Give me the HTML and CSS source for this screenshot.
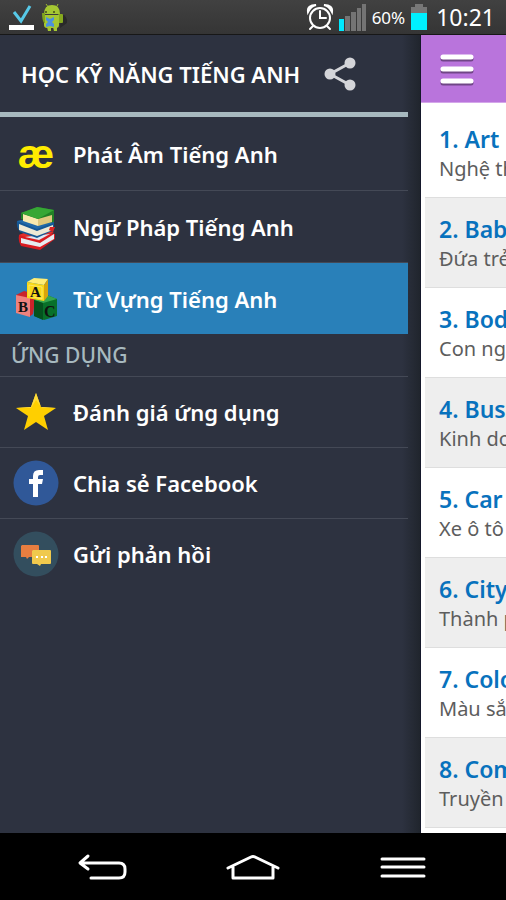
FILE: index.html
```html
<!DOCTYPE html>
<html lang="vi">
<head>
<meta charset="utf-8">
<meta name="viewport" content="width=device-width, initial-scale=1">
<title>Học Kỹ Năng Tiếng Anh</title>
<link rel="stylesheet" href="styles.css">
</head>
<body>
<header class="status">
  <div class="status-group">
    <svg width="28" height="32" viewBox="0 0 28 32" aria-hidden="true"><path d="M6 11l7 9L22 5" fill="none" stroke="#57c9e8" stroke-width="3"/><path d="M1 24h25v5H1z" fill="#fff"/></svg>
    <svg width="30" height="32" viewBox="0 0 30 32" aria-hidden="true">
      <path d="M19 13q7 2 6 9l-7 5z" fill="#292929"/>
      <path d="M4 3l3 4M16 3l-2 4" stroke="#9dbb2b"/>
      <rect x="16" y="13" width="5" height="9" rx="1" fill="#86a91e"/>
      <path d="M2 13Q2 4 10 4q8 0 8 9zM2 14h15v10q0 3-3 3H5q-3 0-3-3z" fill="#a5c732"/>
      <path d="M0 12h3v10H2q-2-3-2-10z" fill="#7fa31d"/><path d="M5 26h4v4H6zM11 26h4v4h-3z" fill="#a5c732"/>
      <circle cx="4" cy="11" r="1" fill="#454c1d"/><circle cx="12" cy="11" r="1" fill="#454c1d"/>
      <path d="M4 16l4 2 4-2v3l-2 2 2 2v3l-4-1-4 1v-3l2-2-2-2z" fill="#4c91df"/>
    </svg>
  </div>
  <div class="status-group status-right">
    <svg width="28" height="30" viewBox="0 0 28 30" fill="none" stroke="#fff" stroke-width="2" stroke-linecap="round" aria-hidden="true"><circle cx="14" cy="16" r="10"/><path d="M14 9v7h6M7 24l-3 3M21 24l3 3"/><path d="M2 10q-1-7 8-7-5 1-8 7zM26 10q1-7-8-7 5 1 8 7z" fill="#fff"/></svg>
    <svg width="28" height="28" viewBox="0 0 28 28" aria-hidden="true"><path fill="#00eaff" d="M0 16h5v12H0z"/><path fill="#747474" d="M6 13h5v15H6zM12 9h5v19h-5zM18 5h4v23h-4zM23 1h4v27h-4z"/></svg>
    <span class="percent">60%</span>
    <svg width="18" height="28" viewBox="0 0 18 28" aria-hidden="true"><path d="M5 1h8v3h4v6H1V4h4z" fill="#777"/><path d="M1 10h16v17H1z" fill="#00f0ff"/></svg>
    <time class="clock">10:21</time>
  </div>
</header>
<div class="stage">
  <nav class="drawer" aria-label="Menu">
    <div class="drawer-head">
      <h1>HỌC KỸ NĂNG TIẾNG ANH</h1>
      <button class="icon-button" aria-label="Chia sẻ"><svg width="32" height="34" viewBox="0 0 32 34" fill="#d4d5d9" aria-hidden="true"><path d="M26 6L6 17l20 11" fill="none" stroke="#d4d5d9" stroke-width="3"/><circle cx="6" cy="17" r="5.5"/><circle cx="26" cy="6" r="5.5"/><circle cx="26" cy="28" r="5.5"/></svg></button>
    </div>
    <ul class="menu">
      <li><a href="#phat-am"><span class="ae" aria-hidden="true">æ</span>Phát Âm Tiếng Anh</a></li>
      <li><a href="#ngu-phap"><svg viewBox="0 0 46 46" aria-hidden="true">
        <path d="M6 31l17-5 19 4v5L27 46 8 42q-3-5-2-11z" fill="#d91b20"/><path d="M8 34l19 5 14-9v5L27 43 8 39z" fill="#e5ebef"/><path d="M6 31l20 6 15-9-18-4z" fill="#e22d2a"/><path d="M12 33l14 3 11-6z" fill="#dce9f4"/>
        <path d="M4 17l20-3 17 4v8L24 34 7 28q-4-5-3-11z" fill="#155895"/><path d="M6 20l18 7 16-6v5L24 32 6 26z" fill="#eee9d4"/><path d="M4 17l20 8 16-6-18-5z" fill="#2169a9"/><path d="M37 23l5 0-2 5-4-2z" fill="#d82424"/>
        <path d="M8 9l17-6 16 3v12l-17 3-16-6z" fill="#228126"/><path d="M10 10l15 5v7L10 17z" fill="#f8e9ae"/><path d="M25 15l14-4v7l-14 4z" fill="#dfc87d"/><path d="M8 9l16-6 17 3-16 9z" fill="#36a735"/>
      </svg>Ngữ Pháp Tiếng Anh</a></li>
      <li><a class="active" href="#tu-vung" aria-current="page"><svg viewBox="0 0 46 46" aria-hidden="true">
        <path d="M3 19l8-4 12 3-3 20-4 3z" fill="#ca242b"/><path d="M3 19l14 3v19L3 37z" fill="#ef827d"/><path d="M21 24l13-5 10 4v17l-13 4-10-4z" fill="#087029"/><path d="M21 24l13-5 10 4-14 4z" fill="#35a550"/><path d="M21 24l9 3v17l-9-4z" fill="#04511d"/>
        <path d="M14 6l7-4 14 1-4 6z" fill="#ffed75"/><path d="M14 6l17 3v16l-17-3z" fill="#f9d817"/><path d="M31 9l4-6v17l-4 5z" fill="#d8a40d"/><path d="M16 9l13 2v12l-13-3z" fill="none" stroke="#ffffff55"/>
        <g font-family="Liberation Serif, serif" font-weight="700" fill="#111"><text x="17" y="21" font-size="15">A</text><text x="5" y="36" font-size="15">B</text><text x="31" y="41" font-size="16">C</text></g>
      </svg>Từ Vựng Tiếng Anh</a></li>
    </ul>
    <h2>ỨNG DỤNG</h2>
    <ul class="menu apps">
      <li><a href="#danh-gia"><svg viewBox="0 0 46 46" aria-hidden="true"><path d="M23 4l5 14 15 1-12 8 4 14-12-8-12 8 4-14L3 19l15-1z" fill="#ffcf00"/><path d="M3 19l15-1 5-14 5 14 15 1H29l-6-8-5 8z" fill="#ffdc3c"/></svg>Đánh giá ứng dụng</a></li>
      <li><a href="#facebook"><svg viewBox="0 0 46 46" aria-hidden="true"><circle cx="23" cy="23" r="22.5" fill="#305898"/><path d="M20 37V24h-4v-5h4v-3q0-6 6-6h4v5h-3q-2 0-2 2v2h5l-1 5h-4v13z" fill="#fff"/></svg>Chia sẻ Facebook</a></li>
      <li><a href="#phan-hoi"><svg viewBox="0 0 46 46" aria-hidden="true"><circle cx="23" cy="23" r="22.5" fill="#334e5e"/><path d="M9 14h16q1 0 1 1v11H16l-2 2-1-2H8V15z" fill="#e77e40"/><path d="M20 19h17q1 0 1 1v12q0 1-1 1h-9l-1 2-3-2h-4q-1 0-1-1V20z" fill="#f0c94d"/><path d="M23 25h2v2h-2zM28 25h2v2h-2zM32 25h2v2h-2z" fill="#fff"/></svg>Gửi phản hồi</a></li>
    </ul>
  </nav>
  <main class="content">
    <div class="toolbar"><button class="icon-button" aria-label="Mở menu"><svg width="34" height="34" viewBox="0 0 34 34" stroke-width="5" stroke-linecap="round" aria-hidden="true"><path d="M3 7h28M3 19h28M3 31h28" stroke="#704687"/><path d="M3 5h28M3 17h28M3 29h28" stroke="#fff"/></svg></button></div>
    <ol class="topics">
      <li><h3>1. Art</h3><p>Nghệ thuật</p></li>
      <li><h3>2. Baby</h3><p>Đứa trẻ</p></li>
      <li><h3>3. Body</h3><p>Con người</p></li>
      <li><h3>4. Business</h3><p>Kinh doanh</p></li>
      <li><h3>5. Car</h3><p>Xe ô tô</p></li>
      <li><h3>6. City</h3><p>Thành phố</p></li>
      <li><h3>7. Colors</h3><p>Màu sắc</p></li>
      <li><h3>8. Communication</h3><p>Truyền thông</p></li>
    </ol>
  </main>
</div>
<footer class="system-nav">
  <button class="icon-button" aria-label="Quay lại"><svg width="54" height="32" viewBox="0 0 54 32" aria-hidden="true"><path d="M12 5L4 12l8 6M5 12h38q6 0 6 6v3q0 6-6 6H15" fill="none" stroke="#fff" stroke-width="3" stroke-linecap="round" stroke-linejoin="round"/></svg></button>
  <button class="icon-button" aria-label="Màn hình chính"><svg width="54" height="32" viewBox="0 0 54 32" aria-hidden="true"><path d="M2 17L25 6q2-1 4 0l23 11M7 16v11h40V16" fill="none" stroke="#fff" stroke-width="3" stroke-linecap="round" stroke-linejoin="round"/></svg></button>
  <button class="icon-button" aria-label="Tùy chọn"><svg width="54" height="32" viewBox="0 0 54 32" aria-hidden="true"><path d="M6 8h42M6 16h42M6 25h42" stroke="#fff" stroke-width="3" stroke-linecap="round"/></svg></button>
</footer>
</body>
</html>
```
FILE: styles.css
```css
* { box-sizing: border-box; }
body {
  margin: 0;
  height: 100vh;
  display: flex;
  flex-direction: column;
  overflow: hidden;
  background: #000;
  font-family: "Noto Sans", sans-serif;
}
h1, h2, h3, p, ul, ol { margin: 0; padding: 0; }
ul, ol { list-style: none; }
svg { display: block; flex: none; }
.icon-button { padding: 0; border: 0; background: none; cursor: pointer; }

.status {
  flex: none;
  height: 35px;
  display: flex;
  justify-content: space-between;
  align-items: center;
  padding: 0 11px 0 8px;
  background: linear-gradient(#414141, #353535);
  border-bottom: 1px solid #171717;
  color: #fff;
}
.status-group { display: flex; align-items: center; gap: 6px; }
.status-right { gap: 5px; }
.percent { font-size: 17px; }
.clock { margin-left: 3px; font-size: 23px; }

.stage { flex: 1; min-height: 0; display: flex; }
.drawer {
  flex: 1;
  min-width: 0;
  padding-right: 12px;
  background: linear-gradient(to left, #20252d, #2d3240 18px);
  border-right: 1px solid #15182b;
}
.drawer-head {
  height: 82px;
  display: flex;
  align-items: center;
  gap: 24px;
  padding-left: 21px;
  border-bottom: 5px solid #a7b9bf;
}
h1 { color: #fff; font-size: 22px; font-weight: 600; white-space: nowrap; }
.menu a {
  height: 73px;
  display: flex;
  align-items: center;
  gap: 14px;
  padding-left: 13px;
  color: #fff;
  font-size: 22px;
  font-weight: 600;
  white-space: nowrap;
  text-decoration: none;
}
.menu li + li, .apps { border-top: 1px solid #444956; }
.menu li + li a { height: 71px; }
.menu .active { background: #2980b9; }
.menu svg, .ae { width: 46px; height: 46px; flex: none; }
.ae { color: #ffec00; font: 700 41px/46px "Liberation Sans", sans-serif; text-align: center; }
h2 { padding-left: 11px; color: #a7b9bf; font-size: 21px; font-weight: 500; line-height: 42px; }
.menu.apps a { height: 70px; }

.content { flex: none; width: 85px; overflow: hidden; background: #fff; }
.toolbar {
  height: 68px;
  display: flex;
  align-items: center;
  padding-left: 19px;
  background: #b974dc;
  border-bottom: 1px solid #d4a6ea;
}
.topics { padding: 5px 0 0 4px; }
.topics li {
  height: 90px;
  padding: 16px 0 0 14px;
  border-bottom: 1px solid #dedede;
  white-space: nowrap;
}
.topics li:nth-child(even) { background: #eee; }
h3 { color: #0872bd; font-size: 23px; font-weight: 600; line-height: 31px; }
.topics p { color: #5d5d5d; font-size: 20px; line-height: 28px; }

.system-nav {
  flex: none;
  height: 67px;
  display: flex;
  justify-content: center;
  align-items: center;
  gap: 96px;
}
```
